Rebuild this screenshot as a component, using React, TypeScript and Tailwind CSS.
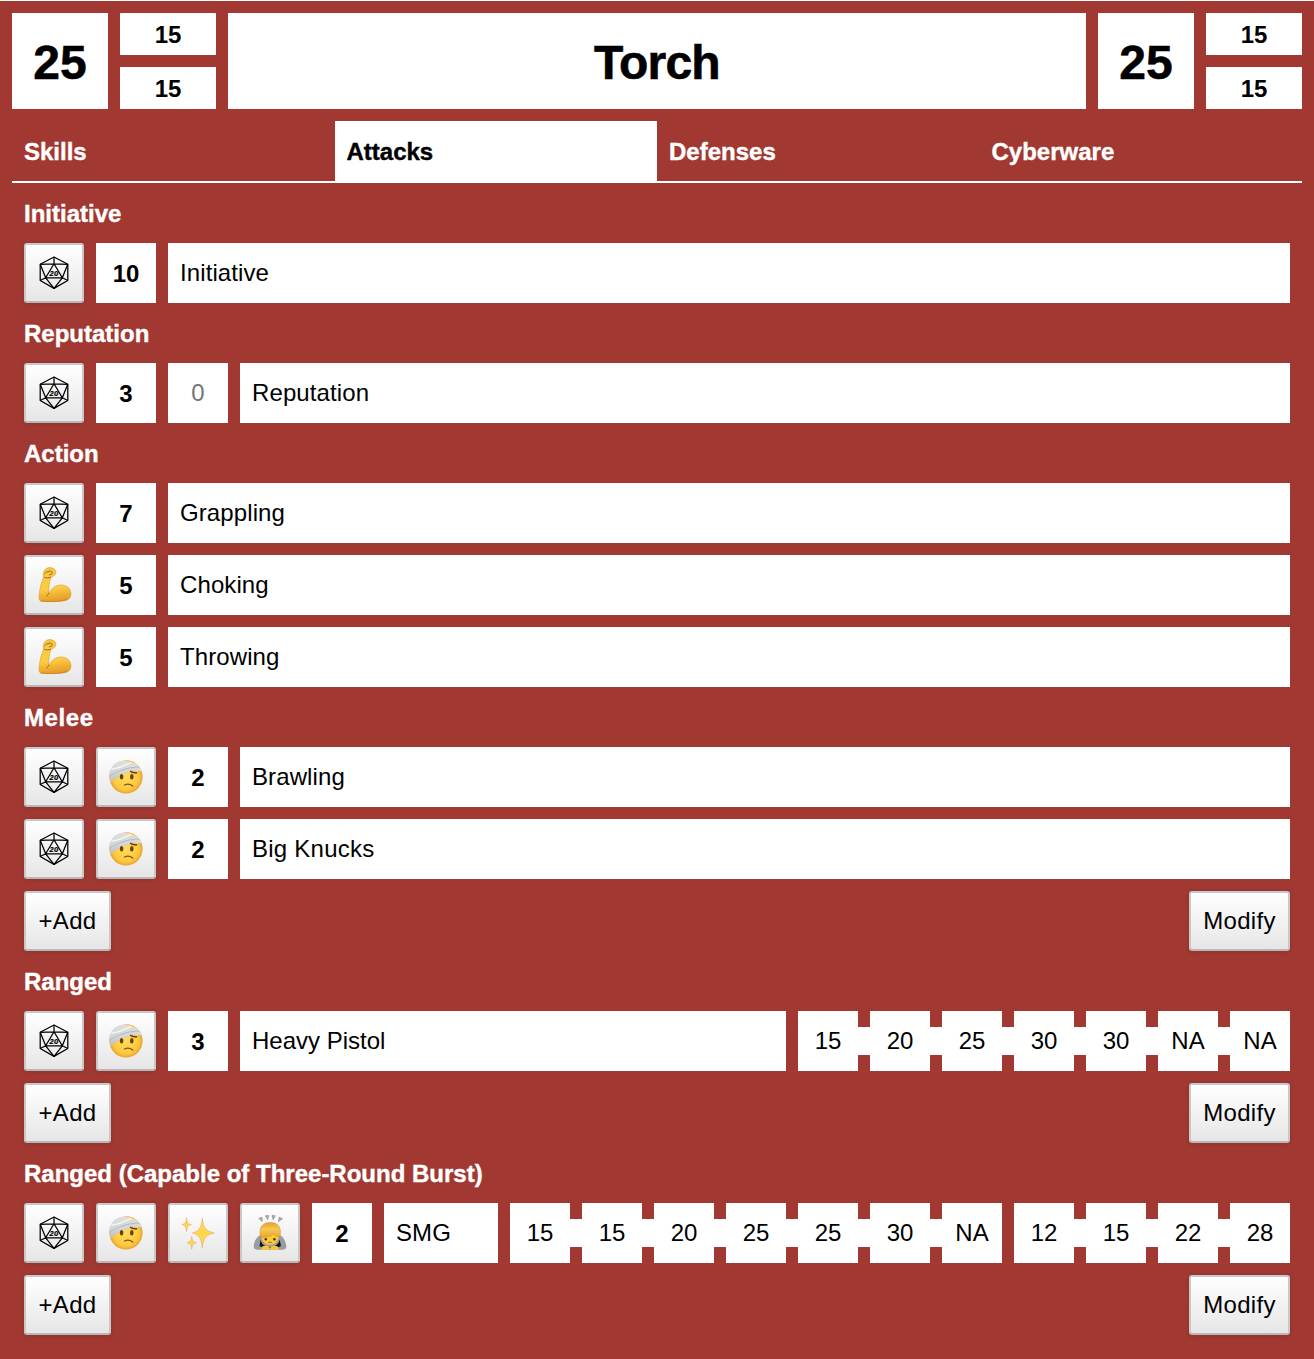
import React from "react";

type IconName = "die" | "arm" | "hurt" | "sparkles" | "bow";

function Icon({ name }: { name: IconName }) {
  if (name === "die")
    return (
      <svg width="36" height="36" viewBox="0 0 36 36" fill="none" stroke="#000" strokeWidth="1.25" strokeLinejoin="round">
        <path d="M18 2 31.8 9.3V25.5L18 33.4 4.2 25.5V9.3Z" />
        <path d="M18 2V8.8M4.2 9.3 18 8.8 31.8 9.3M18 8.8 9.7 22.8H26.3ZM4.2 9.3 9.7 22.8 4.2 25.5M31.8 9.3 26.3 22.8 31.8 25.5M9.7 22.8 18 33.4 26.3 22.8" />
        <text x="18" y="21.3" textAnchor="middle" fontSize="7.6" fontWeight="700" fontStyle="italic" fontFamily="Liberation Sans, sans-serif" fill="#000" stroke="#000" strokeWidth=".2">20</text>
      </svg>
    );
  if (name === "arm")
    return (
      <svg width="36" height="36" viewBox="0 0 36 36">
        <defs>
          <linearGradient id="skin" x1="0" y1="0" x2="0.15" y2="1">
            <stop offset="0" stopColor="#f6c445" />
            <stop offset="0.65" stopColor="#fdcc42" />
            <stop offset="1" stopColor="#e6a02a" />
          </linearGradient>
        </defs>
        <path d="M7.6 5.4C8 2.6 10.5.7 13.4.6C16.4.4 19.2 2 19.8 4.6C20.2 6.6 19 8.6 16.8 9.4L14.8 10.8C13.4 15.5 12.4 20.5 12.9 26.5C15.5 21 20 17.9 25 17.9C31 17.9 35.3 22 35 27.6C34.6 32.4 30.4 34 24.5 34.3C17.5 34.8 10 34.9 4.8 34C3 33.5 2.9 31.4 3.1 29C3.6 22 5.1 16 7.5 10.6C6.9 9 7.1 7.2 7.6 5.4Z" fill="url(#skin)" stroke="#cf9229" strokeWidth=".5" />
        <path d="M8.4 10.5Q11.5 11.6 14.6 10.4M12.9 26.2Q12.2 28 10.8 29M12 4.6Q15.2 3 16.2 5.2T13.4 8M8.6 6.6Q10.4 4.4 12 4.6" fill="none" stroke="#b06e18" strokeWidth="1" strokeLinecap="round" />
        <path d="M4.6 34Q22 35.6 31 32.4" fill="none" stroke="#c98722" strokeWidth=".9" />
      </svg>
    );
  if (name === "hurt")
    return (
      <svg width="36" height="36" viewBox="0 0 36 36">
        <defs>
          <radialGradient id="face" cx=".5" cy=".5" r=".52">
            <stop offset="0" stopColor="#ffdc59" />
            <stop offset=".75" stopColor="#fdc840" />
            <stop offset="1" stopColor="#e8982c" />
          </radialGradient>
          <linearGradient id="bandage" x1="0" y1="0" x2="0" y2="1">
            <stop offset="0" stopColor="#dededf" />
            <stop offset=".5" stopColor="#d6d7d9" />
            <stop offset="1" stopColor="#bdbfc1" />
          </linearGradient>
        </defs>
        <circle cx="18" cy="18" r="16.6" fill="url(#face)" />
        <path d="M1.4 15C2 8.4 6.5 3.3 12 2.2C18 .7 29.5 1.8 33.9 12.1C22.5 11.5 11 15.5 2.9 23.2C1.6 20.8 1.1 18 1.4 15Z" fill="url(#bandage)" />
        <path d="M1.8 17C10 12 20 7.8 31.5 8.2" fill="none" stroke="#b0b2b5" strokeWidth=".8" />
        <path d="M3.5 10.2C11 9.2 19 5.4 24 2.8" fill="none" stroke="#f5f5f5" strokeWidth="1.4" />
        <path d="M16.5 1.6C22 1.2 26 2.4 28.5 4.8L23.5 3Z" fill="#f6bf40" />
        <ellipse cx="13.6" cy="17.7" rx="1.8" ry="2.7" fill="#67400f" />
        <ellipse cx="23.8" cy="17.7" rx="1.8" ry="2.7" fill="#67400f" />
        <path d="M22.6 12.3Q25.5 14.2 28.6 13.8" fill="none" stroke="#67400f" strokeWidth="1.5" strokeLinecap="round" />
        <path d="M16.4 26C19 24.7 22.5 25.2 25 27.2" fill="none" stroke="#8a5115" strokeWidth="1.2" strokeLinecap="round" />
      </svg>
    );
  if (name === "sparkles")
    return (
      <svg width="36" height="36" viewBox="0 0 36 36" fill="#ffd748" stroke="#e6a663" strokeWidth=".55">
        <path d="M22.3 3.2C23.4 12.5 25.2 16 34.4 18C25.2 20 23.4 23.5 22.3 33C21.2 23.5 19.6 20 12.4 18C19.6 16 21.2 12.5 22.3 3.2Z" />
        <path d="M6.6 2.7C7.1 7.5 8 8.9 11.3 9.5C8 10.1 7.1 11.8 6.6 16.5C6.1 11.8 5.2 10.1 1.9 9.5C5.2 8.9 6.1 7.5 6.6 2.7Z" />
        <path d="M11.7 21.4C12.2 25.7 13.1 27.1 16.4 27.7C13.1 28.3 12.2 29.9 11.7 34.2C11.2 29.9 10.3 28.3 7 27.7C10.3 27.1 11.2 25.7 11.7 21.4Z" />
      </svg>
    );
  return (
    <svg width="36" height="36" viewBox="0 0 36 36">
      <defs>
        <linearGradient id="hair" x1="0" y1="0" x2="0" y2="1">
          <stop offset="0" stopColor="#e0a236" />
          <stop offset=".45" stopColor="#f7c850" />
          <stop offset="1" stopColor="#e7a832" />
        </linearGradient>
      </defs>
      <path d="M9 19.5C4.6 21.6 2 26.3 1.7 31.4C1.6 34.4 4 34.9 8 34.8H28C32 34.9 34.4 34.4 34.3 31.4C34 26.3 31.4 21.6 27 19.5Z" fill="#9b9c9f" />
      <path d="M8.5 24.5C9 29 13 32 18 32S27 29 27.7 24.5L29 31 25 33H11L7.6 31Z" fill="#151515" />
      <path d="M18 10C11 10 8.6 16 9.2 21.5C9.8 26.4 13.2 29.8 18 29.8S26.4 26.4 27 21.5C27.6 16 25 10 18 10Z" fill="#fdc93c" />
      <path d="M18.2 7.4C11 7.4 7.6 12 8 18.5C8.1 20.5 8.6 21.8 9.4 22.4C14.5 22.3 19.2 21.6 21.6 18.6C22.8 20.6 24.8 21.8 27.3 22.2C28.2 20.8 28.6 18.5 28.4 16C27.9 10.6 24.5 7.4 18.2 7.4Z" fill="url(#hair)" stroke="#cb8b28" strokeWidth=".5" />
      <ellipse cx="13.8" cy="24.3" rx="1.2" ry="1.3" fill="#4b2c0d" />
      <ellipse cx="22.4" cy="24.3" rx="1.2" ry="1.3" fill="#4b2c0d" />
      <path d="M16.2 27.5Q18 26.9 19.8 27.5" fill="none" stroke="#8b5a18" strokeWidth=".9" />
      <path d="M9.4 33.2C9.6 30.8 14 30.2 17 31.4C18.3 32.5 17.8 34.6 16.2 34.9H11C9.8 34.8 9.3 34.2 9.4 33.2ZM26.6 33.2C26.4 30.8 22 30.2 19 31.4C17.7 32.5 18.2 34.6 19.8 34.9H25C26.2 34.8 26.7 34.2 26.6 33.2Z" fill="#fac33d" />
      <path d="M6.8 3.4 10 2.2 10.2 6.4ZM13.3.8 16.6.5 15.7 4.6ZM20 .5 23.3.8 21.1 4.7ZM27.2 2.2 30.6 3.8 26.4 6.6Z" fill="#b0b0b0" stroke="#858585" strokeWidth=".6" />
    </svg>
  );
}

const buttonLook =
  "flex h-[60px] shrink-0 items-center justify-center rounded-[3px] border-2 border-[#c8c8c8] border-b-[#b8b8b8] bg-linear-to-b from-white to-[#e6e6e6] tracking-[0.3px] shadow-[0_1px_4px_rgba(0,0,0,0.1)]";

function IconButton({ name }: { name: IconName }) {
  return (
    <button className={`${buttonLook} w-[60px]`}>
      <Icon name={name} />
    </button>
  );
}

function Score({ value }: { value: string }) {
  return <div className="flex h-[60px] w-[60px] shrink-0 items-center justify-center bg-white pt-0.5 font-bold">{value}</div>;
}

function Name({ text, spacing = "tracking-[0.1px]" }: { text: string; spacing?: string }) {
  return (
    <div className="flex h-[60px] min-w-0 grow items-center bg-white px-3">
      <span className={spacing}>{text}</span>
    </div>
  );
}

function Ranges({ values }: { values: string[] }) {
  return (
    <div className="flex shrink-0 items-center">
      {values.map((v, i) => (
        <React.Fragment key={i}>
          {i > 0 && <div className="h-7 w-3 bg-white" />}
          <div className="flex h-[60px] w-[60px] items-center justify-center bg-white">{v}</div>
        </React.Fragment>
      ))}
    </div>
  );
}

function Row({ children }: { children: React.ReactNode }) {
  return <div className="flex gap-3">{children}</div>;
}

function Section({ title, spacing = "", children }: { title: string; spacing?: string; children: React.ReactNode }) {
  return (
    <section>
      <h2 className="flex h-[60px] items-center pt-0.5 font-bold text-white [-webkit-text-stroke:0.4px]">
        <span className={spacing}>{title}</span>
      </h2>
      <div className="flex flex-col gap-3">{children}</div>
    </section>
  );
}

function Actions() {
  return (
    <div className="flex justify-between">
      <button className={`${buttonLook} w-[87px]`}>+Add</button>
      <button className={`${buttonLook} w-[101px]`}>Modify</button>
    </div>
  );
}

function Stats() {
  return (
    <>
      <div className="flex w-24 items-center justify-center bg-white pt-1 text-[48px] font-bold [-webkit-text-stroke:0.6px]">25</div>
      <div className="flex w-24 flex-col gap-3 font-bold">
        <div className="flex h-[42px] items-center justify-center bg-white pt-0.5">15</div>
        <div className="flex h-[42px] items-center justify-center bg-white pt-0.5">15</div>
      </div>
    </>
  );
}

const tabs = ["Skills", "Attacks", "Defenses", "Cyberware"];

export default function App() {
  return (
    <div className="h-[1359px] w-[1314px] border-t border-white bg-[#a13832] p-3 font-['Liberation_Sans',Arial,sans-serif] text-[24px] leading-none text-black">
      <header className="flex h-24 gap-3">
        <Stats />
        <h1 className="flex grow items-center justify-center bg-white pt-1 text-[48px] font-bold tracking-[-0.8px] [-webkit-text-stroke:0.6px]">Torch</h1>
        <Stats />
      </header>
      <nav className="mt-3 grid grid-cols-4 border-b-2 border-white font-bold text-white [-webkit-text-stroke:0.4px]">
        {tabs.map((t) => (
          <div key={t} className={t === "Attacks" ? "flex h-[60px] items-center bg-white px-3 pt-0.5 text-black" : "flex h-[60px] items-center px-3 pt-0.5"}>
            {t}
          </div>
        ))}
      </nav>
      <main className="px-3">
        <Section title="Initiative">
          <Row>
            <IconButton name="die" />
            <Score value="10" />
            <Name text="Initiative" />
          </Row>
        </Section>
        <Section title="Reputation">
          <Row>
            <IconButton name="die" />
            <Score value="3" />
            <div className="flex h-[60px] w-[60px] items-center justify-center bg-white text-[#757575]">0</div>
            <Name text="Reputation" />
          </Row>
        </Section>
        <Section title="Action">
          <Row>
            <IconButton name="die" />
            <Score value="7" />
            <Name text="Grappling" />
          </Row>
          <Row>
            <IconButton name="arm" />
            <Score value="5" />
            <Name text="Choking" />
          </Row>
          <Row>
            <IconButton name="arm" />
            <Score value="5" />
            <Name text="Throwing" />
          </Row>
        </Section>
        <Section title="Melee" spacing="tracking-[0.6px]">
          <Row>
            <IconButton name="die" />
            <IconButton name="hurt" />
            <Score value="2" />
            <Name text="Brawling" />
          </Row>
          <Row>
            <IconButton name="die" />
            <IconButton name="hurt" />
            <Score value="2" />
            <Name text="Big Knucks" spacing="tracking-[0.25px]" />
          </Row>
          <Actions />
        </Section>
        <Section title="Ranged">
          <Row>
            <IconButton name="die" />
            <IconButton name="hurt" />
            <Score value="3" />
            <Name text="Heavy Pistol" spacing="tracking-normal" />
            <Ranges values={["15", "20", "25", "30", "30", "NA", "NA"]} />
          </Row>
          <Actions />
        </Section>
        <Section title="Ranged (Capable of Three-Round Burst)">
          <Row>
            <IconButton name="die" />
            <IconButton name="hurt" />
            <IconButton name="sparkles" />
            <IconButton name="bow" />
            <Score value="2" />
            <Name text="SMG" />
            <Ranges values={["15", "15", "20", "25", "25", "30", "NA"]} />
            <Ranges values={["12", "15", "22", "28"]} />
          </Row>
          <Actions />
        </Section>
      </main>
    </div>
  );
}
